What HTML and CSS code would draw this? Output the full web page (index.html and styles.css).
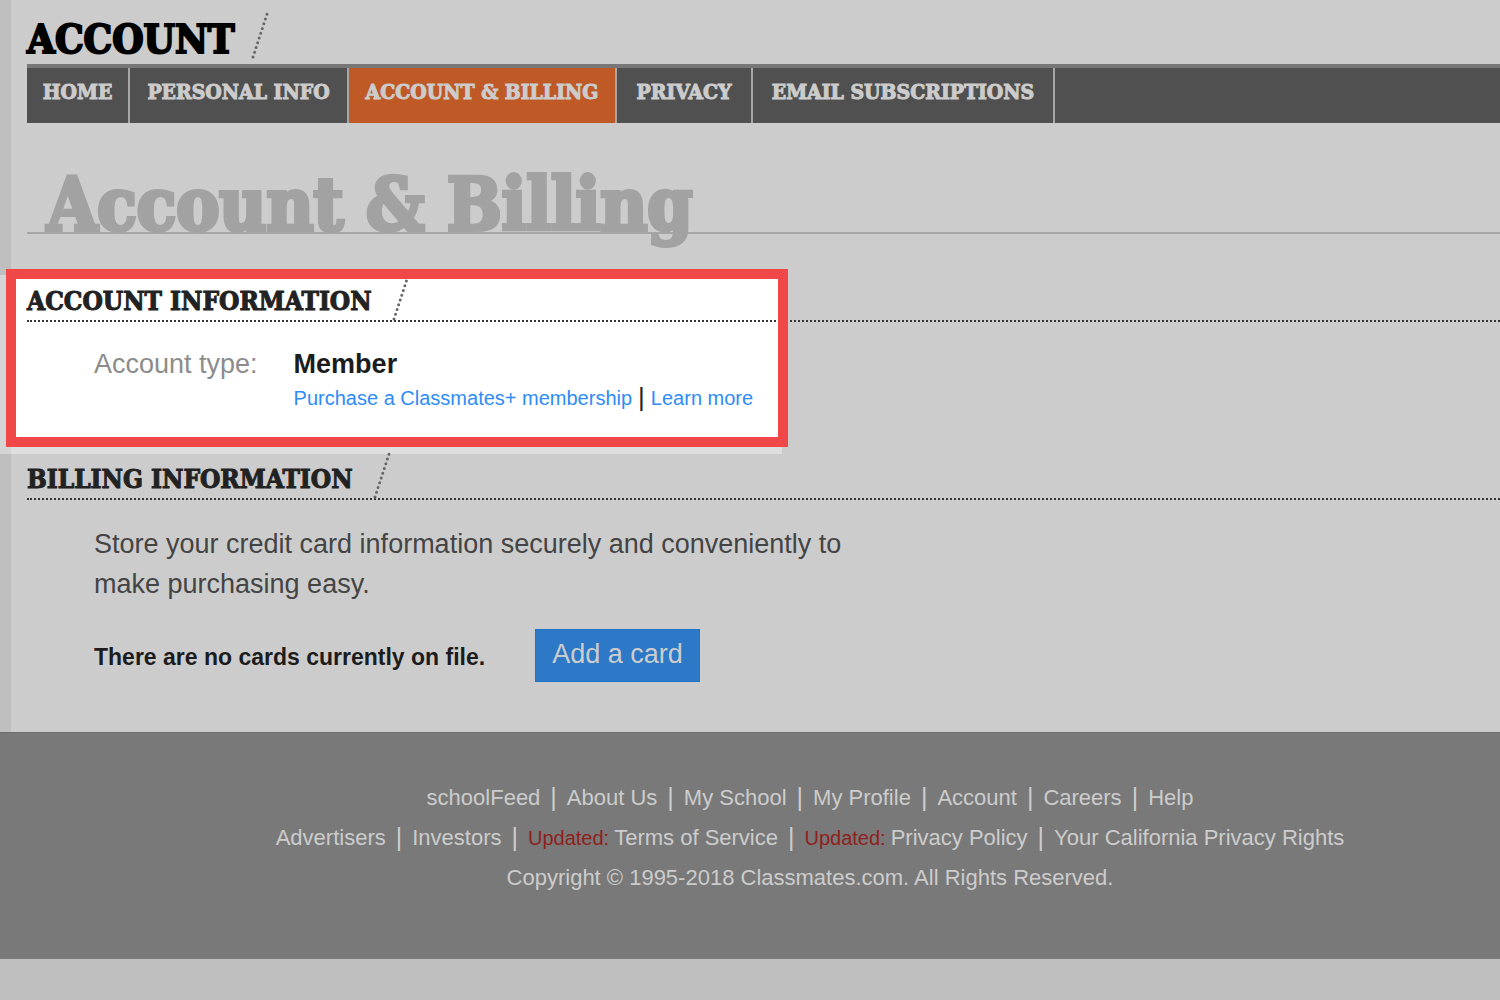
FILE: index.html
```html
<!DOCTYPE html>
<html lang="en">
<head>
<meta charset="utf-8">
<meta name="viewport" content="width=device-width, initial-scale=1">
<title>Account &amp; Billing</title>
<link rel="stylesheet" href="styles.css">
</head>
<body>
<div class="page">
  <header class="masthead">
    <h1 class="masthead-title">ACCOUNT</h1>
    <svg class="slash" width="20" height="52" viewBox="0 0 20 52" aria-hidden="true"><path d="M2 49 L17 3"/></svg>
  </header>
  <nav class="tabs">
    <a class="tab" href="#home">HOME</a>
    <a class="tab" href="#personal">PERSONAL INFO</a>
    <a class="tab tab-active" href="#billing" aria-current="page">ACCOUNT &amp; BILLING</a>
    <a class="tab" href="#privacy">PRIVACY</a>
    <a class="tab" href="#email">EMAIL SUBSCRIPTIONS</a>
  </nav>
  <main>
    <h2 class="page-title"><span>Account &amp; Billing</span></h2>
    <section class="section section-highlight">
      <div class="highlight-glow"></div>
      <div class="highlight-fill"></div>
      <div class="section-head">
        <h3 class="section-title">ACCOUNT INFORMATION</h3>
        <svg class="slash" width="20" height="52" viewBox="0 0 20 52" aria-hidden="true"><path d="M2 49 L17 3"/></svg>
      </div>
      <dl class="account">
        <dt>Account type:</dt>
        <dd>
          <strong class="account-level">Member</strong>
          <div class="account-links"><a href="#purchase">Purchase a Classmates+ membership</a><span class="bar">|</span><a href="#more">Learn more</a></div>
        </dd>
      </dl>
      <div class="highlight-frame"></div>
    </section>
    <section class="section">
      <div class="section-head">
        <h3 class="section-title">BILLING INFORMATION</h3>
        <svg class="slash" width="20" height="52" viewBox="0 0 20 52" aria-hidden="true"><path d="M2 49 L17 3"/></svg>
      </div>
      <div class="billing">
        <p class="billing-text">Store your credit card information securely and conveniently to make purchasing easy.</p>
        <div class="billing-cards">
          <strong class="billing-status">There are no cards currently on file.</strong>
          <button class="add-card" type="button">Add a card</button>
        </div>
      </div>
    </section>
  </main>
</div>
<footer class="footer">
  <div class="footer-row"><a href="#feed">schoolFeed</a><span class="bar">|</span><a href="#about">About Us</a><span class="bar">|</span><a href="#school">My School</a><span class="bar">|</span><a href="#profile">My Profile</a><span class="bar">|</span><a href="#account">Account</a><span class="bar">|</span><a href="#careers">Careers</a><span class="bar">|</span><a href="#help">Help</a></div>
  <div class="footer-row"><a href="#ads">Advertisers</a><span class="bar">|</span><a href="#investors">Investors</a><span class="bar">|</span><span class="updated">Updated:</span><a href="#terms">Terms of Service</a><span class="bar">|</span><span class="updated">Updated:</span><a href="#policy">Privacy Policy</a><span class="bar">|</span><a href="#california">Your California Privacy Rights</a></div>
  <div class="footer-row">Copyright © 1995-2018 Classmates.com. All Rights Reserved.</div>
</footer>
</body>
</html>
```
FILE: styles.css
```css
* {
  box-sizing: border-box;
}

body {
  margin: 0;
  background: #bfbfbf;
  color: #1c1c1c;
  font-family: "Liberation Sans", Arial, sans-serif;
  font-size: 27px;
}

h1, h2, h3, p, dl, dd {
  margin: 0;
}

a {
  color: inherit;
  text-decoration: none;
}

.page {
  margin-left: 11px;
  padding: 0 0 50px 16px;
  background: #cccccc;
}

.masthead-title,
.tab,
.page-title,
.section-title {
  font-family: "DejaVu Serif Condensed", "DejaVu Serif", serif;
  font-weight: 700;
  white-space: nowrap;
}

.slash {
  flex: none;
  fill: none;
  stroke: #666666;
  stroke-width: 3;
  stroke-linecap: round;
  stroke-dasharray: 0 5;
}

.masthead {
  display: flex;
  gap: 16px;
  height: 64px;
  padding-top: 8px;
}

.masthead-title {
  color: #000000;
  font-size: 40px;
  line-height: 62px;
  -webkit-text-stroke: 2px #000000;
}

.tabs {
  display: grid;
  grid-template-columns: 103px 219px 268px 136px 302px;
  height: 59px;
  border-top: 4px solid #777777;
  background: #505050;
}

.tab {
  border-right: 2px solid #a6a6a6;
  color: #cccccc;
  font-size: 21px;
  line-height: 48px;
  text-align: center;
  -webkit-text-stroke: 1px #cccccc;
}

.tab-active {
  background: #bf5a26;
}

.page-title {
  height: 111px;
  padding-left: 20px;
  border-bottom: 2px solid #a6a6a6;
  color: #a2a2a2;
  font-size: 72px;
  line-height: 164px;
  -webkit-text-stroke: 4px #a2a2a2;
}

.section {
  position: relative;
}

.section-highlight {
  height: 178px;
  margin-top: 36px;
}

.section-head {
  position: relative;
  display: flex;
  gap: 20px;
  height: 52px;
  border-bottom: 2px dotted #333333;
}

.section-title {
  color: #222222;
  font-size: 26px;
  line-height: 62px;
  -webkit-text-stroke: 1px #222222;
}

.highlight-glow {
  position: absolute;
  top: 5px;
  left: -27px;
  width: 782px;
  height: 179px;
  background: linear-gradient(90deg, #d5d5d5 11px, #dedede 11px);
}

.highlight-fill,
.highlight-frame {
  position: absolute;
  top: -1px;
  left: -21px;
  width: 782px;
  height: 178px;
}

.highlight-fill {
  background: #ffffff;
}

.highlight-frame {
  border: 10px solid #f04848;
  pointer-events: none;
}

.account {
  position: relative;
  display: flex;
  gap: 36px;
  padding: 24px 0 0 67px;
  line-height: 36px;
}

.account dt {
  color: #8c8c8c;
}

.account-level {
  display: block;
}

.account-links {
  display: flex;
  color: #2d8cf7;
  font-size: 20px;
  line-height: 32px;
}

.account-links .bar {
  padding: 0 6px;
  color: #222222;
  font-size: 26px;
  line-height: 30px;
}

.billing {
  padding: 24px 0 0 67px;
}

.billing-text {
  max-width: 760px;
  color: #444444;
  line-height: 40px;
}

.billing-cards {
  display: flex;
  align-items: center;
  gap: 50px;
  margin-top: 25px;
}

.billing-status {
  padding-top: 4px;
  font-size: 23px;
}

.add-card {
  height: 53px;
  padding: 0 16px 2px;
  border: 1px solid #1f74c8;
  background: #2d79c7;
  color: #cccccc;
  font-family: inherit;
  font-size: 27px;
}

.footer {
  height: 227px;
  padding: 45px 0 0 120px;
  border-top: 1px solid #6c6c6c;
  background: #797979;
  color: #cccccc;
  font-size: 22px;
  line-height: 40px;
}

.footer-row {
  display: flex;
  justify-content: center;
  white-space: nowrap;
}

.footer .bar {
  padding: 0 10px;
  font-size: 25px;
  line-height: 38px;
}

.updated {
  margin-right: 5px;
  color: #8f211e;
  font-size: 20px;
}
```
